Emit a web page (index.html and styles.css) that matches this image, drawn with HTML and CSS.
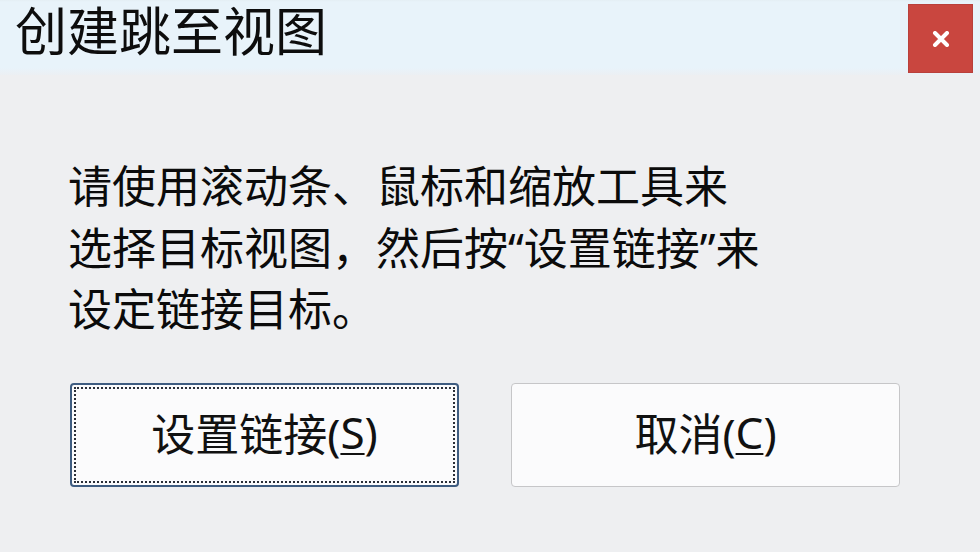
FILE: index.html
```html
<!DOCTYPE html>
<html lang="zh-CN">
<head>
<meta charset="utf-8">
<title>创建跳至视图</title>
<link rel="stylesheet" href="styles.css">
</head>
<body>
<div class="dialog">
  <div class="titlebar">
    <div class="title">创建跳至视图</div>
    <button class="close" aria-label="关闭">
      <svg width="18" height="16" viewBox="0 0 18 16"><path d="M3 2 L15 14 M15 2 L3 14" stroke="#fff" stroke-width="4" stroke-linecap="round"/></svg>
    </button>
  </div>
  <div class="content">
    <p class="message">请使用滚动条、鼠标和缩放工具来<br>选择目标视图，然后按“设置链接”来<br>设定链接目标。</p>
    <div class="actions">
      <button class="btn btn-focus">设置链接(<u>S</u>)</button>
      <button class="btn">取消(<u>C</u>)</button>
    </div>
  </div>
</div>
</body>
</html>
```
FILE: styles.css
```css
html, body {
  margin: 0;
  padding: 0;
}
body {
  width: 980px;
  height: 552px;
  overflow: hidden;
  background: #eeeff1;
  font-family: "Noto Sans", "Noto Sans CJK SC", sans-serif;
  color: #111;
}
.dialog {
  display: flex;
  flex-direction: column;
  height: 552px;
}
.titlebar {
  height: 75px;
  display: flex;
  justify-content: space-between;
  align-items: flex-start;
  background: linear-gradient(#e4eef4 0, #e8f3fa 2px, #e8f3fa 68px, #eceff2 76px);
}
.title {
  font-size: 52px;
  line-height: 76px;
  margin-top: -7px;
  padding-left: 15px;
  font-weight: 400;
  color: #0d0d0d;
}
.close {
  margin: 4px 7px 0 0;
  width: 65px;
  height: 69px;
  border: 1px solid #b9403b;
  background: #c9463f;
  display: flex;
  align-items: center;
  justify-content: center;
  padding: 0;
}
.content {
  padding: 81px 0 0 68px;
}
.message {
  margin: 0;
  font-size: 44px;
  line-height: 61.5px;
  color: #0b0b0b;
}
.actions {
  display: flex;
  gap: 52px;
  margin-top: 42px;
  padding-left: 2px;
}
.btn {
  width: 389px;
  height: 104px;
  box-sizing: border-box;
  border: 1px solid #c6c6c8;
  border-radius: 4px;
  background: #fbfbfc;
  font-family: "Noto Sans", "Noto Sans CJK SC", sans-serif;
  font-size: 44px;
  color: #111;
  padding: 0 0 6px 0;
  display: flex;
  align-items: center;
  justify-content: center;
}
.btn u {
  text-decoration-thickness: 2px;
  text-underline-offset: 4px;
}
.btn-focus {
  border: 2px solid #3e5c80;
  outline: 2px dotted #2b2f38;
  outline-offset: -6px;
}
```
